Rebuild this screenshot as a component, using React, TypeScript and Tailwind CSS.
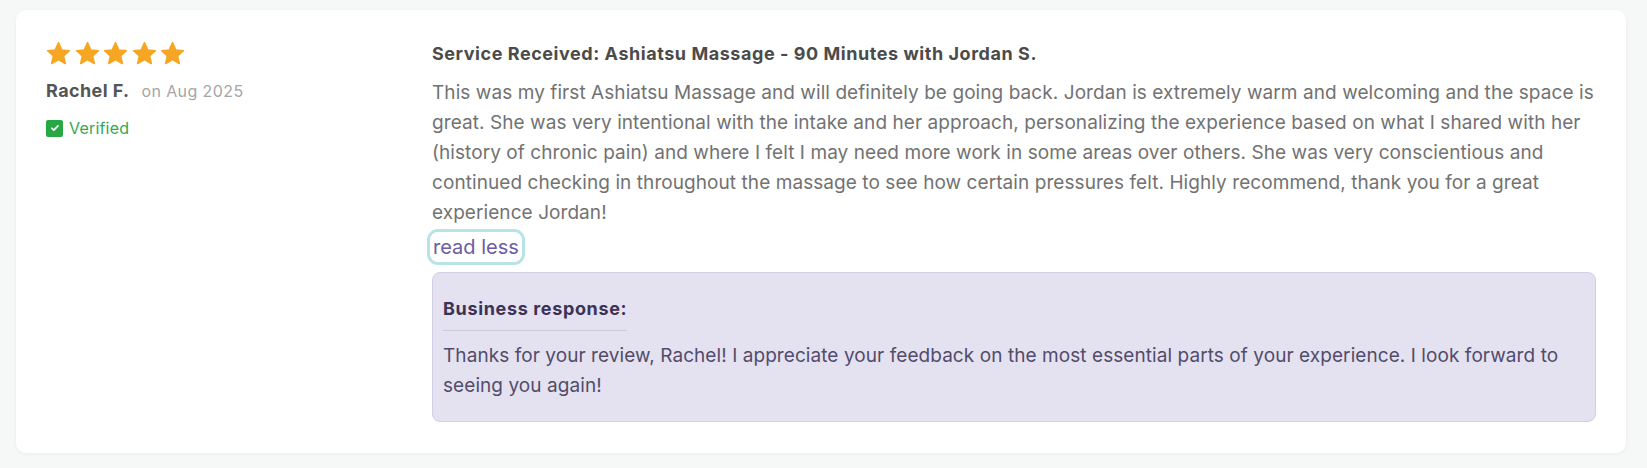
import React from "react";

const Star = () => (
  <svg viewBox="0 0 24 24" className="h-[25px] w-[25px]" aria-hidden="true">
    <path
      d="M12 1.8l3.05 6.8 7.35.75-5.55 4.95 1.65 7.25L12 17.8l-6.5 3.75 1.65-7.25-5.55-4.95 7.35-.75z"
      fill="#f6a623"
      stroke="#f6a623"
      strokeWidth="1.6"
      strokeLinejoin="round"
    />
  </svg>
);

const Check = () => (
  <span className="flex h-[17px] w-[17px] items-center justify-center rounded-[2px] bg-[#27a844]">
    <svg viewBox="0 0 12 12" className="h-[10px] w-[10px]" aria-hidden="true">
      <path d="M2.3 6.3l2.3 2.2 5-5" fill="none" stroke="#fff" strokeWidth="2" strokeLinecap="round" strokeLinejoin="round" />
    </svg>
  </span>
);

export default function App() {
  return (
    <div className="min-h-[468px] bg-[#f6f7f7] px-4 pt-[10px] font-['Inter',sans-serif]">
      <div className="flex w-[1610px] rounded-[10px] bg-white pb-[31px] pl-[30px] pr-[30px] pt-[32px] shadow-[0_1px_4px_rgba(0,0,0,0.05)]">
        <div className="w-[386px] shrink-0">
          <div className="-mt-[1px] flex gap-[3.5px]">
            <Star />
            <Star />
            <Star />
            <Star />
            <Star />
          </div>
          <div className="mt-[13px] flex items-baseline gap-[12px] leading-[24px]">
            <span className="text-[18px] font-bold tracking-[0.4px] text-[#555]">Rachel F.</span>
            <span className="text-[16px] tracking-[0.4px] text-[#a6a6a6]">on Aug 2025</span>
          </div>
          <div className="mt-[14px] flex items-center gap-[6px]">
            <Check />
            <span className="text-[16px] leading-[22px] tracking-[0.2px] text-[#33a852]">Verified</span>
          </div>
        </div>
        <div className="min-w-0 flex-1">
          <h3 className="text-[18px] font-bold leading-[24px] tracking-[0.55px] text-[#4b4b4b]">
            Service Received: Ashiatsu Massage - 90 Minutes with Jordan S.
          </h3>
          <p className="mt-[12px] text-[19px] leading-[30px] tracking-[0.07px] text-[#727272]">
            This was my first Ashiatsu Massage and will definitely be going back. Jordan is extremely warm and welcoming and the space is great. She was very intentional with the intake and her approach, personalizing the experience based on what I shared with her (history of chronic pain) and where I felt I may need more work in some areas over others. She was very conscientious and continued checking in throughout the massage to see how certain pressures felt. Highly recommend, thank you for a great experience Jordan!
          </p>
          <button className="-ml-[2px] mt-[4px] block rounded-[8px] px-[3px] text-[20px] leading-[30px] text-[#6b5ca5] outline outline-[3px] outline-[#b9e4e6]">
            read less
          </button>
          <div className="mt-[10px] rounded-[8px] border border-[#d3cfe4] bg-[#e4e1f1] pb-[20px] pl-[10px] pr-[10px] pt-[24px]">
            <div className="inline-block border-b border-[#cdc9dd] pb-[9px] text-[18px] font-bold leading-[24px] tracking-[0.65px] text-[#3b3355]">
              Business response:
            </div>
            <p className="mt-[10px] text-[19px] leading-[30px] tracking-[0.07px] text-[#524c69]">
              Thanks for your review, Rachel! I appreciate your feedback on the most essential parts of your experience. I look forward to seeing you again!
            </p>
          </div>
        </div>
      </div>
    </div>
  );
}
